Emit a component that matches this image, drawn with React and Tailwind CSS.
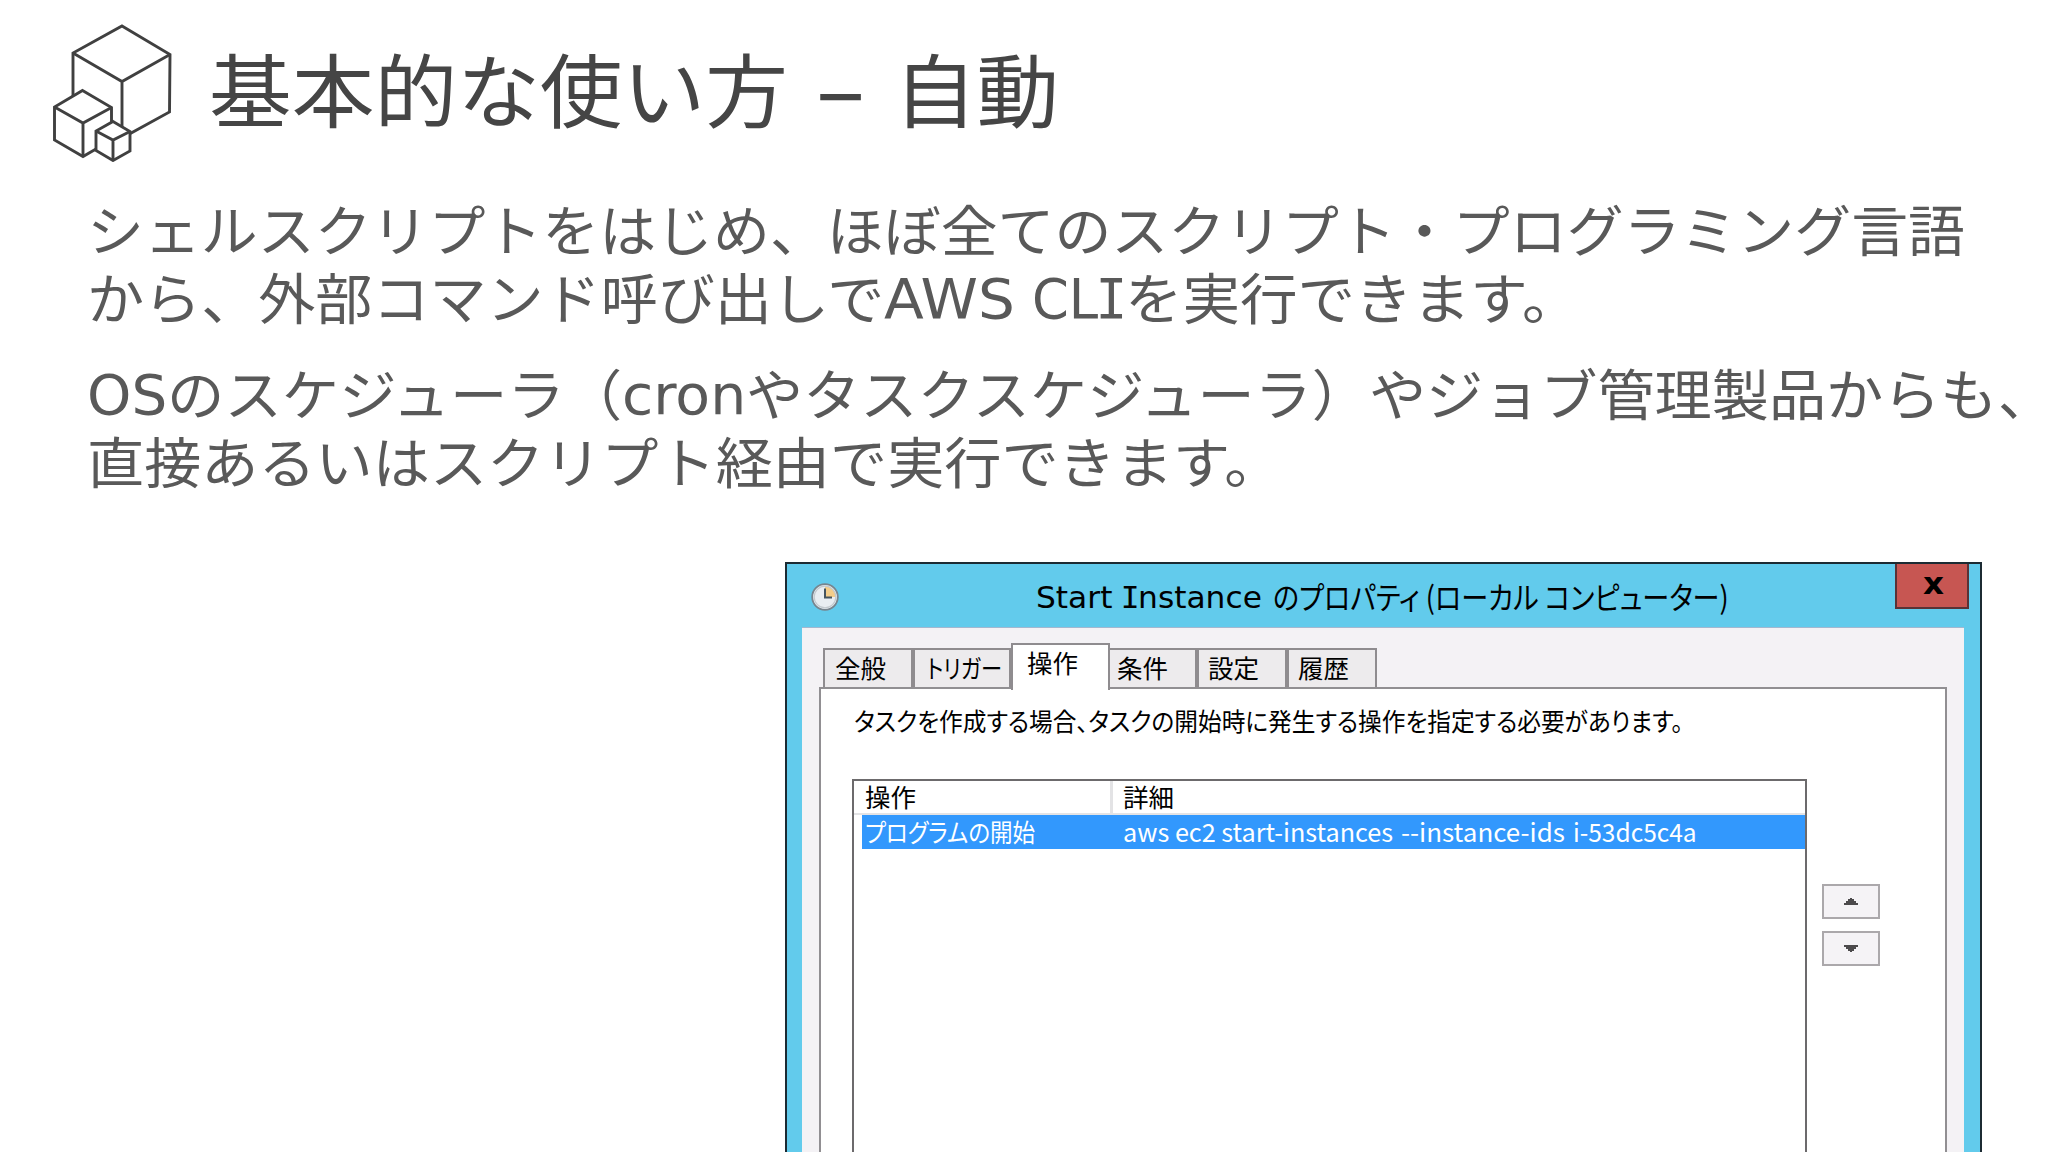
import { useLayoutEffect, useRef, useState } from "react";

const jp = "font-['Noto_Sans_CJK_JP',sans-serif]";
const jpTight = "font-['Noto_Sans_CJK_JP',sans-serif] [font-feature-settings:'palt']";
const latin = "font-['DejaVu_Sans','Noto_Sans_CJK_JP',sans-serif]";

// Squeezes or stretches one line of text to a known width.
const Fit = ({ width, className = "", children }) => {
  const ref = useRef(null);
  const [scale, setScale] = useState(1);

  useLayoutEffect(() => {
    const measure = () => setScale(width / ref.current.offsetWidth);
    measure();
    document.fonts.ready.then(measure);
  }, [width]);

  return (
    <span className={`inline-flex whitespace-pre ${className}`} style={{ width }}>
      <span ref={ref} className="inline-block shrink-0 origin-left" style={{ transform: `scaleX(${scale})` }}>
        {children}
      </span>
    </span>
  );
};

// Capital I with bars, as in Verdana.
const BarI = () => <span className="-mx-[0.05em] font-['DejaVu_Sans_Mono',monospace]">I</span>;

const Cubes = () => (
  <svg
    className="h-[152px] w-[130px] shrink-0"
    viewBox="0 0 130 152"
    fill="#fff"
    stroke="#404040"
    strokeWidth="2.9"
  >
    <path d="M72 16 120 44.500 119.500 102 72 128 23 100 23 43Z" />
    <path d="M23 43 72 71.500 120 44.500M72 71.500V128" fill="none" />
    <path d="M32.500 80.500 61.500 97.500V130L33 146.500 4.500 130V97Z" />
    <path d="M4.500 97 33 113 61.500 97.500M33 113V146.500" fill="none" />
    <path d="M63 111.500 80 121.500V141L63 150.500 46 140.500V121Z" />
    <path d="M46 121 63 130 80 121.500M63 130V150" fill="none" />
  </svg>
);

const Clock = () => (
  <svg className="h-7 w-7" viewBox="0 0 28 28">
    <circle cx="14" cy="14" r="12.800" fill="#e9eef2" stroke="#77858e" strokeWidth="1.800" />
    <path d="M14 14V3A11 11 0 0 1 25 14Z" fill="#f3cd8a" />
    <circle cx="14" cy="14" r="10.800" fill="none" stroke="#c3cacf" strokeWidth="1.200" />
    <path d="M14 5.500V14.500H21" fill="none" stroke="#45545e" strokeWidth="2" />
  </svg>
);

const tabs = [
  { label: "全般", box: "w-[90px] pl-[10px]", width: 51 },
  { label: "トリガー", box: "w-[98px] pl-[12px]", width: 75 },
  { label: "操作", box: "w-[99px] pl-[14px]", width: 51, active: true },
  { label: "条件", box: "w-[87px] pl-[7px] border-l-0", width: 51 },
  { label: "設定", box: "w-[90px] pl-[9px]", width: 51 },
  { label: "履歴", box: "w-[90px] pl-[9px]", width: 51 },
];

const Tab = ({ label, box, width, active }) => (
  <div
    className={`border-2 border-b-0 border-[#8f8c8f] text-[25.500px] leading-[34px] ${box} ${
      active ? "z-10 -mb-[3px] h-[47px] bg-white" : "h-[39px] bg-[#edebed]"
    }`}
  >
    <Fit width={width}>{label}</Fit>
  </div>
);

const Arrow = ({ d }) => (
  <button className="flex h-[35px] w-[58px] items-center justify-center border-2 border-[#aba8ab] bg-[#f5f3f6]">
    <svg className="h-[7px] w-[14px]" viewBox="0 0 14 7" fill="#4c4a4c">
      <path d={d} />
    </svg>
  </button>
);

const PropertiesDialog = () => (
  <div
    className={`ml-[785px] flex h-[590px] w-[1197px] flex-col border-2 border-b-0 border-[#1c2b33] bg-[#62cbec] text-black ${jpTight}`}
  >
    <div className="flex h-[63px] shrink-0 items-start">
      <div className="ml-[24px] mt-[19px]">
        <Clock />
      </div>
      <div className="ml-[197px] mt-[8px] flex text-[31px] leading-[48px]">
        <Fit width={226} className={`h-[48px] pt-px ${latin}`}>
          Start <BarI />nstance
        </Fit>
        <Fit width={456} className="ml-[11px]">
          のプロパティ (ローカル コンピューター)
        </Fit>
      </div>
      <button className="ml-auto mr-[11px] flex h-[45px] w-[74px] justify-center border-2 border-t-0 border-[#5a3236] bg-[#c75652] font-['DejaVu_Sans',sans-serif] text-[31px] leading-[38px] font-bold">
        <Fit width={21} className="ml-[2px]">x</Fit>
      </button>
    </div>

    <div className="mr-[16px] ml-[15px] flex grow flex-col border-t border-[#a3b8d0] bg-[#f4f2f5] px-[17px]">
      <div className="flex h-[59px] shrink-0 items-end pl-[4px]">
        {tabs.map((tab) => (
          <Tab key={tab.label} {...tab} />
        ))}
      </div>
      <div className="flex grow flex-col border-2 border-b-0 border-[#918f92] bg-white">
        <div className="ml-[33px] mt-[12px] h-[78px] shrink-0 text-[25.500px] leading-[38px]">
          <Fit width={829}>タスクを作成する場合、タスクの開始時に発生する操作を指定する必要があります。</Fit>
        </div>
        <div className="flex grow pl-[31px]">
          <div className="flex w-[955px] flex-col border-2 border-b-0 border-[#6c6a6c] text-[25.500px]">
            <div className="flex h-[34px] border-b-2 border-[#e3e3e5] leading-[30px]">
              <div className="w-[259px] border-r-[3px] border-[#e3e3e5] pl-[11px]">
                <Fit width={51}>操作</Fit>
              </div>
              <div className="pl-[10px]">
                <Fit width={51}>詳細</Fit>
              </div>
            </div>
            <div className="ml-[8px] flex h-[34px] bg-[#3298fd] pl-[3px] leading-[31px] text-white">
              <Fit width={170}>プログラムの開始</Fit>
              <Fit width={270} className="ml-[88px]">aws ec2 start-instances</Fit>
              <Fit width={164} className="ml-[8px]">--instance-ids</Fit>
              <Fit width={124} className="ml-[8px]">i-53dc5c4a</Fit>
            </div>
          </div>
          <div className="ml-[15px] mt-[105px] flex flex-col gap-3">
            <Arrow d="M0 7V5H2V3H4V1H6V0H8V1H10V3H12V5H14V7Z" />
            <Arrow d="M0 0V2H2V4H4V6H6V7H8V6H10V4H12V2H14V0Z" />
          </div>
        </div>
      </div>
    </div>
  </div>
);

export default function App() {
  return (
    <div className="flex h-[1152px] w-[2048px] flex-col overflow-hidden bg-white">
      <header className={`flex h-[170px] shrink-0 pl-[50px] pt-[10px] text-[#454545] ${jp}`}>
        <Cubes />
        <h1 className="ml-[29px] mt-[26px] flex text-[80px] leading-[100px]">
          <Fit width={579}>基本的な使い方</Fit>
          <Fit width={49} className="-mt-px ml-[28px] h-[100px] font-medium">–</Fit>
          <Fit width={165} className="ml-[29px]">自動</Fit>
        </h1>
      </header>

      <main className={`h-[392px] shrink-0 pl-[87px] pt-[23px] text-[55px] leading-[68px] text-[#595959] ${jp}`}>
        <p>
          <span className="flex">
            <Fit width={1878}>シェルスクリプトをはじめ、ほぼ全てのスクリプト・プログラミング言語</Fit>
          </span>
          <span className="flex">
            <Fit width={797}>から、外部コマンド呼び出しで</Fit>
            <Fit width={131} className={`h-[68px] pt-1 ${latin}`}>AWS</Fit>
            <Fit width={93} className={`ml-[17px] h-[68px] pt-1 ${latin}`}>
              CL<BarI />
            </Fit>
            <Fit width={455}>を実行できます。</Fit>
          </span>
        </p>
        <p className="mt-[28px]">
          <span className="flex">
            <Fit width={80} className={`h-[68px] pt-1 ${latin}`}>OS</Fit>
            <Fit width={455}>のスケジューラ（</Fit>
            <Fit width={124} className={`h-[68px] pt-1 ${latin}`}>cron</Fit>
            <Fit width={1252}>やタスクスケジューラ）やジョブ管理製品からも</Fit>
            <Fit width={28} className="[font-feature-settings:'halt']">、</Fit>
          </span>
          <span className="flex">
            <Fit width={1195}>直接あるいはスクリプト経由で実行できます。</Fit>
          </span>
        </p>
      </main>

      <PropertiesDialog />
    </div>
  );
}
